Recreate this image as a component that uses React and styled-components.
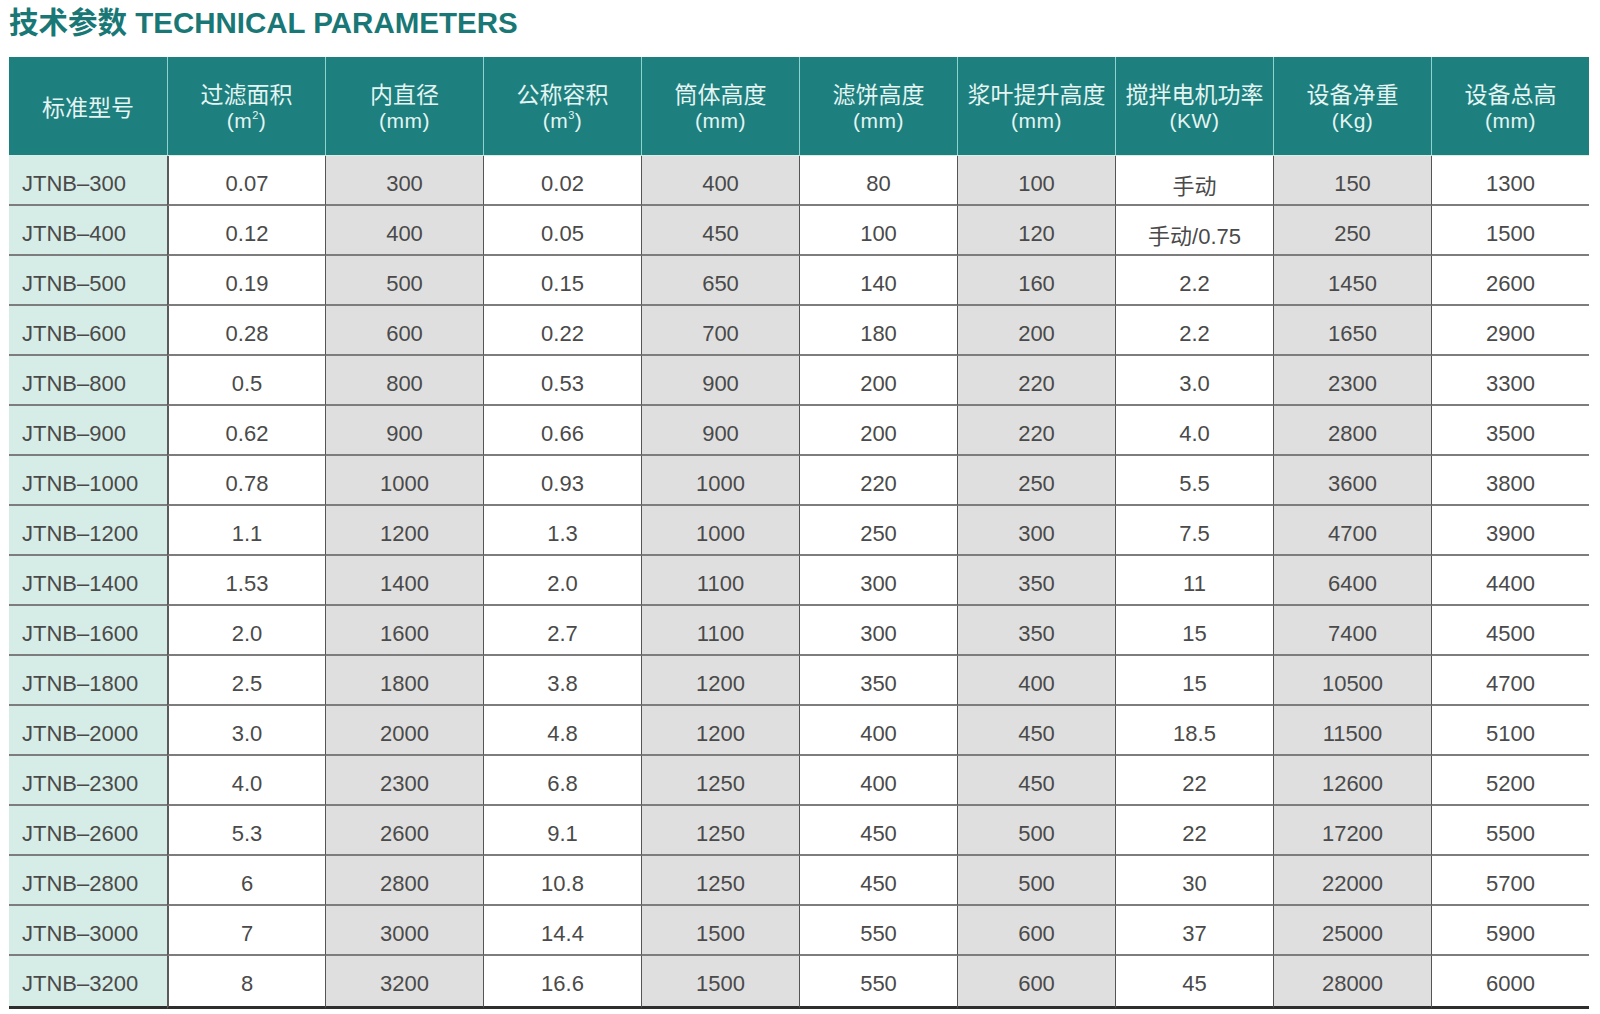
import React from 'react';
import styled, { createGlobalStyle } from 'styled-components';

const GlobalStyle = createGlobalStyle`
    body {
        margin: 0;
        background: #fff;
    }
`;

const Page = styled.div`
    padding: 0 11px 0 9px;
    font-family: 'Liberation Sans', 'Noto Sans CJK SC', sans-serif;
`;

const Title = styled.h1`
    margin: 0;
    height: 57px;
    box-sizing: border-box;
    padding-top: 5px;
    font-size: 29.5px;
    line-height: 36px;
    font-weight: 700;
    color: #197876;
    font-family: 'Liberation Sans', 'Noto Sans CJK SC', sans-serif;
`;

const Grid = styled.div`
    display: grid;
    grid-template-columns: repeat(10, 158px);
`;

const HeadCell = styled.div`
    height: 99px;
    box-sizing: border-box;
    background: #1d7f7e;
    color: #e4f4f2;
    border-left: ${(p) => (p.$first ? 'none' : '1.5px solid #8fd3ce')};
    border-bottom: 1px solid #d8eeeb;
    display: flex;
    flex-direction: column;
    align-items: center;
    justify-content: center;
    padding: ${(p) => (p.$single ? '0' : '1px 0 0')};
    font-size: 23px;
    line-height: 27px;
    font-family: 'Noto Sans CJK SC', sans-serif;
    font-weight: 400;
    white-space: nowrap;
`;

const Unit = styled.span`
    font-family: 'Liberation Sans', sans-serif;
    font-size: 21px;
    letter-spacing: 0.5px;
    sup {
        font-size: 11px;
        line-height: 0;
        vertical-align: 9px;
    }
`;

const backgrounds = {
    model: '#d6ece6',
    plain: '#ffffff',
    shade: '#dfdfdf',
};

const Cell = styled.div`
    height: ${(p) => (p.$last ? '53px' : '50px')};
    box-sizing: border-box;
    background: ${(p) => backgrounds[p.$tone]};
    border-bottom: ${(p) => (p.$last ? '3px solid #2e2e2e' : '2px solid #7d7d7d')};
    border-left: ${(p) => (p.$tone === 'model' ? 'none' : p.$col === 1 ? '2px solid #5a5a5a' : '1px solid #555')};
    color: #4a4a4a;
    font-size: 22px;
    display: flex;
    align-items: center;
    justify-content: ${(p) => (p.$tone === 'model' ? 'flex-start' : 'center')};
    padding-left: ${(p) => (p.$tone === 'model' ? '13px' : '0')};
    padding-top: ${(p) => (p.$last ? '5px' : '8px')};
    white-space: nowrap;
`;

const headers = [
    { name: '标准型号' },
    { name: '过滤面积', unit: <>(m<sup>2</sup>)</> },
    { name: '内直径', unit: '(mm)' },
    { name: '公称容积', unit: <>(m<sup>3</sup>)</> },
    { name: '筒体高度', unit: '(mm)' },
    { name: '滤饼高度', unit: '(mm)' },
    { name: '浆叶提升高度', unit: '(mm)' },
    { name: '搅拌电机功率', unit: '(KW)' },
    { name: '设备净重', unit: '(Kg)' },
    { name: '设备总高', unit: '(mm)' },
];

const rows = [
    ['JTNB–300', '0.07', '300', '0.02', '400', '80', '100', '手动', '150', '1300'],
    ['JTNB–400', '0.12', '400', '0.05', '450', '100', '120', '手动/0.75', '250', '1500'],
    ['JTNB–500', '0.19', '500', '0.15', '650', '140', '160', '2.2', '1450', '2600'],
    ['JTNB–600', '0.28', '600', '0.22', '700', '180', '200', '2.2', '1650', '2900'],
    ['JTNB–800', '0.5', '800', '0.53', '900', '200', '220', '3.0', '2300', '3300'],
    ['JTNB–900', '0.62', '900', '0.66', '900', '200', '220', '4.0', '2800', '3500'],
    ['JTNB–1000', '0.78', '1000', '0.93', '1000', '220', '250', '5.5', '3600', '3800'],
    ['JTNB–1200', '1.1', '1200', '1.3', '1000', '250', '300', '7.5', '4700', '3900'],
    ['JTNB–1400', '1.53', '1400', '2.0', '1100', '300', '350', '11', '6400', '4400'],
    ['JTNB–1600', '2.0', '1600', '2.7', '1100', '300', '350', '15', '7400', '4500'],
    ['JTNB–1800', '2.5', '1800', '3.8', '1200', '350', '400', '15', '10500', '4700'],
    ['JTNB–2000', '3.0', '2000', '4.8', '1200', '400', '450', '18.5', '11500', '5100'],
    ['JTNB–2300', '4.0', '2300', '6.8', '1250', '400', '450', '22', '12600', '5200'],
    ['JTNB–2600', '5.3', '2600', '9.1', '1250', '450', '500', '22', '17200', '5500'],
    ['JTNB–2800', '6', '2800', '10.8', '1250', '450', '500', '30', '22000', '5700'],
    ['JTNB–3000', '7', '3000', '14.4', '1500', '550', '600', '37', '25000', '5900'],
    ['JTNB–3200', '8', '3200', '16.6', '1500', '550', '600', '45', '28000', '6000'],
];

const toneFor = (col) => (col === 0 ? 'model' : col % 2 === 0 ? 'shade' : 'plain');

export default function App() {
    return (
        <Page>
            <GlobalStyle />
            <Title>技术参数 TECHNICAL PARAMETERS</Title>
            <Grid>
                {headers.map((h, i) => (
                    <HeadCell key={h.name} $first={i === 0} $single={!h.unit}>
                        <span>{h.name}</span>
                        {h.unit && <Unit>{h.unit}</Unit>}
                    </HeadCell>
                ))}
                {rows.map((row, r) =>
                    row.map((value, c) => (
                        <Cell key={r + '-' + c} $tone={toneFor(c)} $col={c} $last={r === rows.length - 1}>
                            {value}
                        </Cell>
                    ))
                )}
            </Grid>
        </Page>
    );
}
